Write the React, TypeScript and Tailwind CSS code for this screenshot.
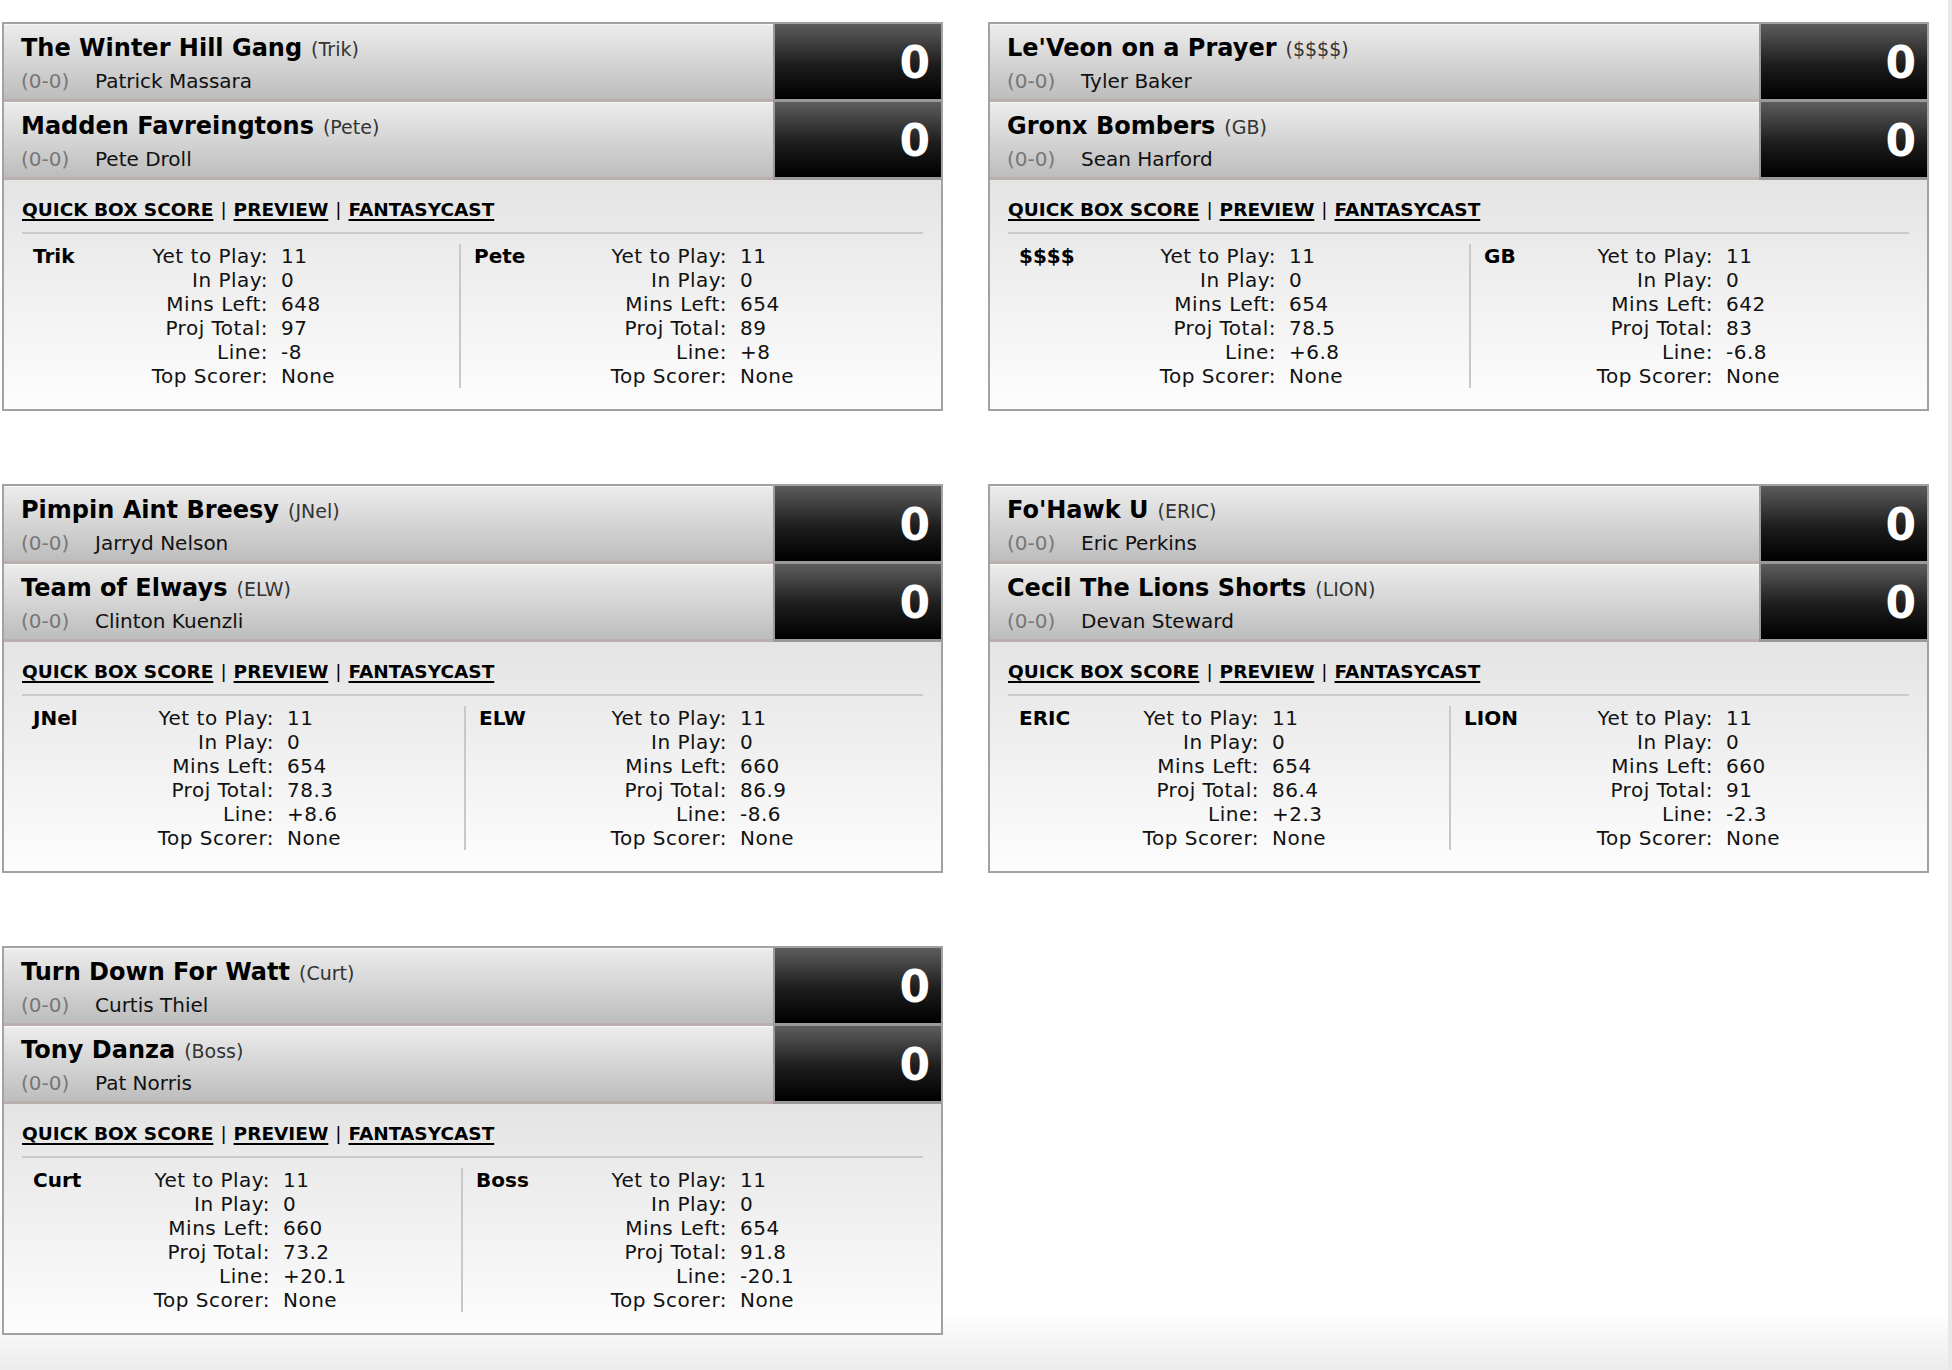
type Team = {
  name: string;
  abbr: string;
  owner: string;
  score: number;
  stats: (string | number)[];
};

type Matchup = {
  home: Team;
  away: Team;
  leftW: string;
  labL: string;
  labR: string;
};

const LABELS = ["Yet to Play:", "In Play:", "Mins Left:", "Proj Total:", "Line:", "Top Scorer:"];

const matchups: Matchup[] = [
  {
    home: { name: "The Winter Hill Gang", abbr: "Trik", owner: "Patrick Massara", score: 0, stats: [11, 0, 648, 97, "-8", "None"] },
    away: { name: "Madden Favreingtons", abbr: "Pete", owner: "Pete Droll", score: 0, stats: [11, 0, 654, 89, "+8", "None"] },
    leftW: "w-[437px]",
    labL: "w-[146px]",
    labR: "w-[166px]",
  },
  {
    home: { name: "Le'Veon on a Prayer", abbr: "$$$$", owner: "Tyler Baker", score: 0, stats: [11, 0, 654, 78.5, "+6.8", "None"] },
    away: { name: "Gronx Bombers", abbr: "GB", owner: "Sean Harford", score: 0, stats: [11, 0, 642, 83, "-6.8", "None"] },
    leftW: "w-[461px]",
    labL: "w-[168px]",
    labR: "w-[142px]",
  },
  {
    home: { name: "Pimpin Aint Breesy", abbr: "JNel", owner: "Jarryd Nelson", score: 0, stats: [11, 0, 654, 78.3, "+8.6", "None"] },
    away: { name: "Team of Elways", abbr: "ELW", owner: "Clinton Kuenzli", score: 0, stats: [11, 0, 660, 86.9, "-8.6", "None"] },
    leftW: "w-[442px]",
    labL: "w-[152px]",
    labR: "w-[161px]",
  },
  {
    home: { name: "Fo'Hawk U", abbr: "ERIC", owner: "Eric Perkins", score: 0, stats: [11, 0, 654, 86.4, "+2.3", "None"] },
    away: { name: "Cecil The Lions Shorts", abbr: "LION", owner: "Devan Steward", score: 0, stats: [11, 0, 660, 91, "-2.3", "None"] },
    leftW: "w-[441px]",
    labL: "w-[151px]",
    labR: "w-[162px]",
  },
  {
    home: { name: "Turn Down For Watt", abbr: "Curt", owner: "Curtis Thiel", score: 0, stats: [11, 0, 660, 73.2, "+20.1", "None"] },
    away: { name: "Tony Danza", abbr: "Boss", owner: "Pat Norris", score: 0, stats: [11, 0, 654, 91.8, "-20.1", "None"] },
    leftW: "w-[439px]",
    labL: "w-[148px]",
    labR: "w-[164px]",
  },
];

function TeamRow({ team }: { team: Team }) {
  return (
    <div className="flex h-[78px]">
      <div className="flex-1 flex flex-col pl-[17px] pt-[10px] border-t border-t-[#f7f7f7] border-b-[3px] border-b-[#bcaeac] bg-[linear-gradient(to_bottom,#ececec,#bdbdbd)]">
        <div className="leading-[26px] whitespace-nowrap">
          <span className="text-[24px] font-bold text-black">{team.name}</span>
          <span className="ml-[9px] text-[19px] text-[#333]">({team.abbr})</span>
        </div>
        <div className="mt-[4px] leading-[26px] text-[20px] whitespace-nowrap">
          <span className="inline-block w-[74px] text-[#777]">(0-0)</span>
          <span className="text-[#111]">{team.owner}</span>
        </div>
      </div>
      <div className="w-[168px] flex items-center justify-end pr-[11px] pt-[2px] border-l-2 border-l-[#999] border-b-[3px] border-b-[#999] bg-[linear-gradient(to_bottom,#5d5d5d,#1c1c1c_55%,#000)]">
        <span className="text-[44px] font-bold text-white leading-none">{team.score}</span>
      </div>
    </div>
  );
}

function StatBlock({ team, labW, pad }: { team: Team; labW: string; pad: string }) {
  return (
    <div className="flex">
      <div className={`w-[100px] ${pad} font-bold text-black`}>{team.abbr}</div>
      <div className={`${labW} text-right text-[#111] tracking-[0.5px]`}>
        {LABELS.map((l) => (
          <div key={l}>{l}</div>
        ))}
      </div>
      <div className="pl-[13px] text-[#111] tracking-[0.5px]">
        {team.stats.map((s, i) => (
          <div key={i}>{s}</div>
        ))}
      </div>
    </div>
  );
}

function MatchupCard({ m }: { m: Matchup }) {
  return (
    <div className="w-[941px] h-[389px] border-2 border-[#a2a2a2] flex flex-col bg-white">
      <TeamRow team={m.home} />
      <TeamRow team={m.away} />
      <div className="flex-1 px-[18px] pt-[19px] bg-[linear-gradient(to_bottom,#e4e4e4,#fdfdfd)]">
        <div className="text-[18.5px] leading-[22px] text-black whitespace-nowrap">
          <a className="font-bold underline underline-offset-[3px] decoration-2">QUICK BOX SCORE</a>
          <span className="mx-[7px]">|</span>
          <a className="font-bold underline underline-offset-[3px] decoration-2">PREVIEW</a>
          <span className="mx-[7px]">|</span>
          <a className="font-bold underline underline-offset-[3px] decoration-2">FANTASYCAST</a>
        </div>
        <div className="mt-[11px] h-[2px] bg-[#cbcbcb]" />
        <div className="mt-[10px] flex text-[20px] leading-[24px]">
          <div className={m.leftW}>
            <StatBlock team={m.home} labW={m.labL} pad="pl-[11px]" />
          </div>
          <div className="w-[2px] bg-[#c8c8c8]" />
          <div className="flex-1">
            <StatBlock team={m.away} labW={m.labR} pad="pl-[13px]" />
          </div>
        </div>
      </div>
    </div>
  );
}

export default function App() {
  return (
    <div
      className="min-h-[1370px] pt-[22px] pl-[2px] border-r-4 border-r-[#e8e8e8] bg-[linear-gradient(to_bottom,#fff_1310px,#ececec_1370px)]"
      style={{ fontFamily: '"DejaVu Sans", Verdana, sans-serif' }}
    >
      <div className="grid grid-cols-[941px_941px] gap-x-[45px] gap-y-[73px]">
        {matchups.map((m, i) => (
          <MatchupCard key={i} m={m} />
        ))}
      </div>
    </div>
  );
}
